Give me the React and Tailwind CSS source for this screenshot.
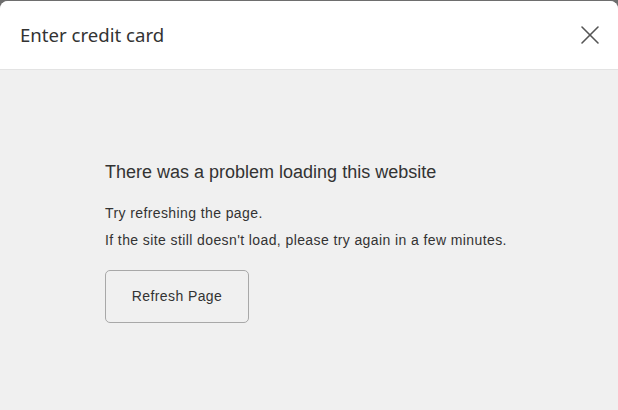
import { X } from 'lucide-react';

function App() {
  return (
    <div className="w-[618px] h-[410px] bg-[#6e6e6e] pt-px">
      <div className="h-[409px] flex flex-col bg-[#f0f0f0] rounded-t-lg overflow-hidden">
        <div className="h-[69px] shrink-0 bg-white border-b border-[#e3e3e3] flex items-center justify-between pl-5 pr-3">
          <span className="text-[18.6px] text-[#333] font-['Noto_Sans',sans-serif]">Enter credit card</span>
          <X size={32} strokeWidth={1.2} className="text-[#555]" />
        </div>
        <div className="flex-1 pl-[105px] pt-[92px] font-['Liberation_Sans',Arial,sans-serif] text-[#333]">
          <h1 className="text-[18px] leading-5">There was a problem loading this website</h1>
          <p className="mt-[18px] text-[14px] leading-[27px] tracking-[0.4px]">Try refreshing the page.</p>
          <p className="text-[14px] leading-[27px] tracking-[0.4px]">If the site still doesn't load, please try again in a few minutes.</p>
          <button className="mt-4 w-[144px] h-[53px] border border-[#a8a8a8] rounded-[5px] text-[14px] tracking-[0.4px] text-[#333] bg-transparent">
            Refresh Page
          </button>
        </div>
      </div>
    </div>
  );
}

export default App;
